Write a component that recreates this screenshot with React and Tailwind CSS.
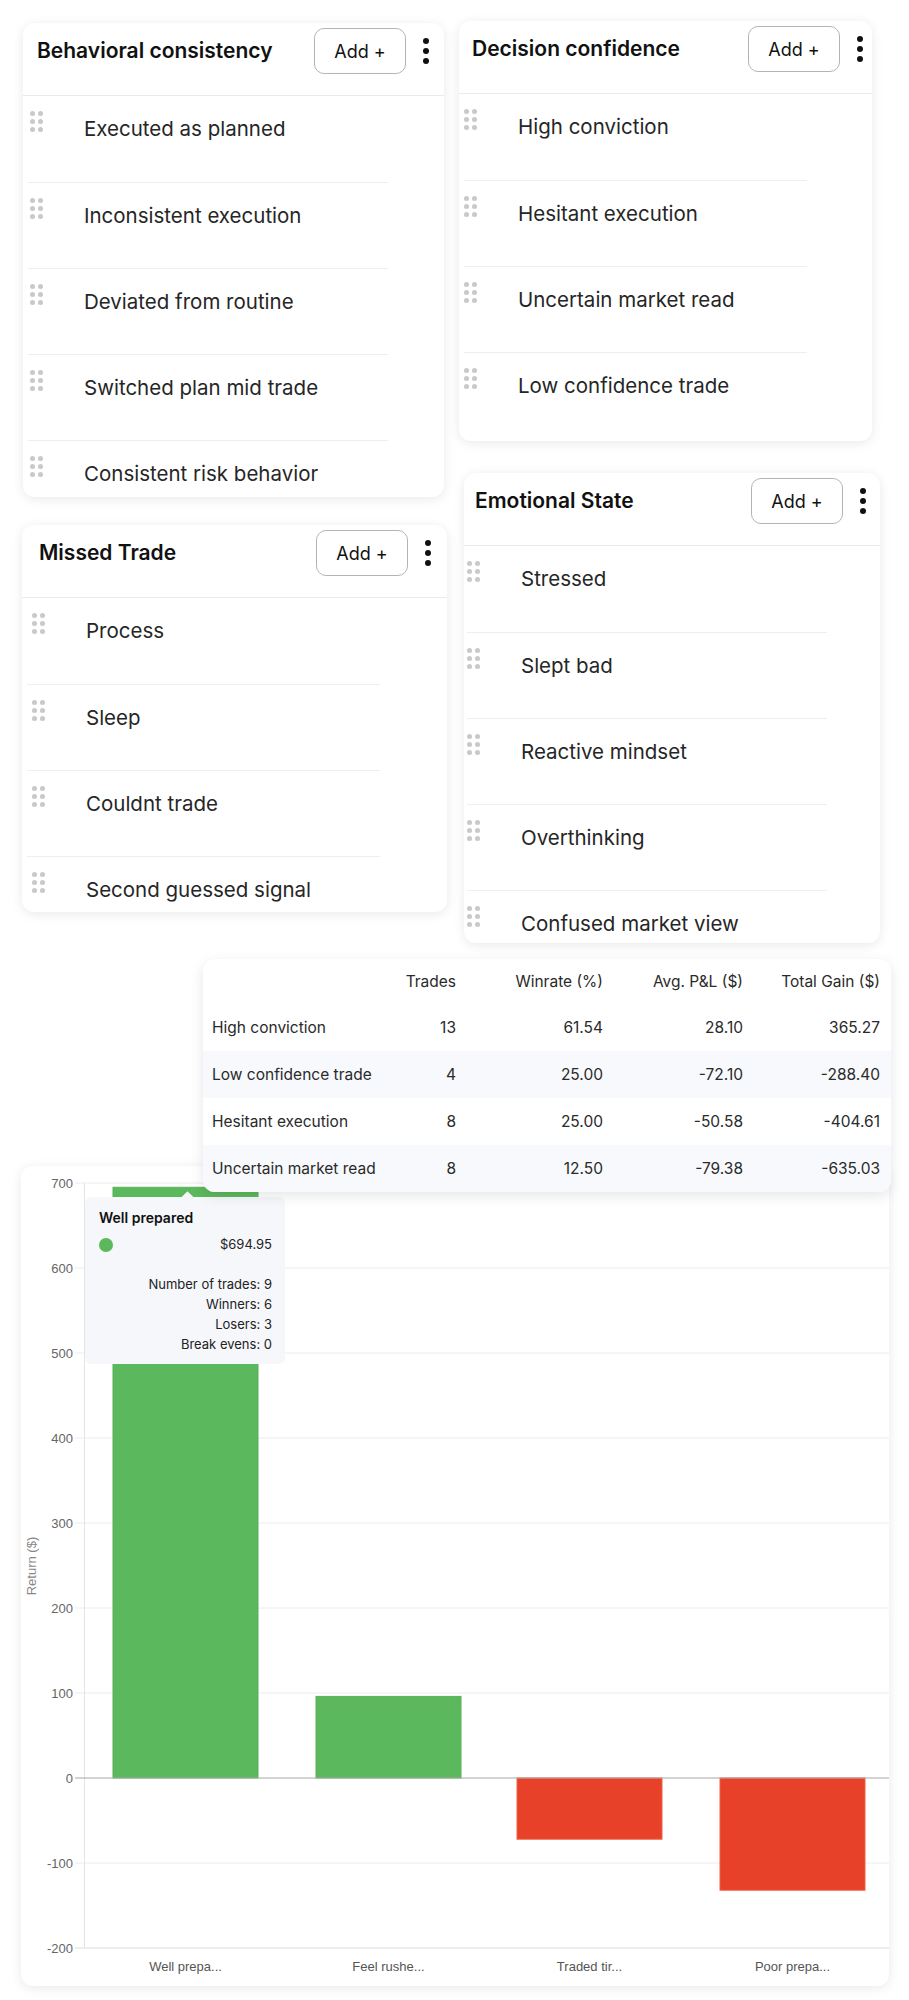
import React from "react";

const cards = {
  behavioral: {
    title: "Behavioral consistency",
    items: [
      "Executed as planned",
      "Inconsistent execution",
      "Deviated from routine",
      "Switched plan mid trade",
      "Consistent risk behavior",
    ],
  },
  decision: {
    title: "Decision confidence",
    items: [
      "High conviction",
      "Hesitant execution",
      "Uncertain market read",
      "Low confidence trade",
    ],
  },
  missed: {
    title: "Missed Trade",
    items: ["Process", "Sleep", "Couldnt trade", "Second guessed signal"],
  },
  emotional: {
    title: "Emotional State",
    items: [
      "Stressed",
      "Slept bad",
      "Reactive mindset",
      "Overthinking",
      "Confused market view",
    ],
  },
};

const tableRows = [
  ["High conviction", "13", "61.54", "28.10", "365.27"],
  ["Low confidence trade", "4", "25.00", "-72.10", "-288.40"],
  ["Hesitant execution", "8", "25.00", "-50.58", "-404.61"],
  ["Uncertain market read", "8", "12.50", "-79.38", "-635.03"],
];

const bars = [
  { label: "Well prepa...", value: 694.95, x: 92 },
  { label: "Feel rushe...", value: 96, x: 295 },
  { label: "Traded tir...", value: -72, x: 496 },
  { label: "Poor prepa...", value: -132, x: 699 },
];

const DragHandle = () => (
  <div className="grid grid-cols-2 gap-[3px] w-[13px] shrink-0">
    {[0, 1, 2, 3, 4, 5].map((i) => (
      <span key={i} className="block w-[5px] h-[5px] rounded-full bg-[#c9c9c9]" />
    ))}
  </div>
);

const Kebab = () => (
  <div className="flex flex-col gap-[4px] items-center w-[6px]">
    <span className="block w-[6px] h-[6px] rounded-full bg-[#111]" />
    <span className="block w-[6px] h-[6px] rounded-full bg-[#111]" />
    <span className="block w-[6px] h-[6px] rounded-full bg-[#111]" />
  </div>
);

const TagCard = ({ data, className, headCls, rowCls }) => (
  <div
    className={`bg-white rounded-[12px] overflow-hidden shadow-[0_2px_12px_rgba(0,0,0,0.09)] ${className}`}
  >
    <div className="h-[73px] pt-[5px] border-b border-[#ebebeb]">
      <div className={`h-[46px] flex items-center ${headCls}`}>
        <h3 className="text-[21px] font-semibold text-[#111]">{data.title}</h3>
        <button className="ml-auto h-[46px] w-[92px] rounded-[10px] border border-[#b4b4b4] text-[18px] text-[#111]">
          Add +
        </button>
        <div className="ml-[17px]">
          <Kebab />
        </div>
      </div>
    </div>
    {data.items.map((item, i) => (
      <div
        key={item}
        className={`h-[86px] pt-[15px] flex items-start ${rowCls} ${
          i > 0 ? "border-t border-[#eeeeee]" : ""
        }`}
      >
        <DragHandle />
        <span className="ml-[41px] mt-[3px] text-[20.5px] leading-[30px] text-[#262626]">
          {item}
        </span>
      </div>
    ))}
  </div>
);

const cols = "grid grid-cols-[180px_64px_147px_140px_137px] pl-[9px] pr-[11px] items-center";

const StatsTable = () => (
  <div className="relative z-10 ml-[203px] w-[688px] bg-white rounded-[12px] overflow-hidden shadow-[0_4px_14px_rgba(0,0,0,0.1)] text-[15.5px] text-[#2a2a2a]">
    <div className={`${cols} h-[45px]`}>
      <span />
      <span className="text-right">Trades</span>
      <span className="text-right">Winrate (%)</span>
      <span className="text-right">Avg. P&amp;L ($)</span>
      <span className="text-right">Total Gain ($)</span>
    </div>
    {tableRows.map((row, i) => (
      <div
        key={row[0]}
        className={`${cols} h-[47px] ${i % 2 === 1 ? "bg-[#f7f9fc]" : "bg-white"}`}
      >
        <span className="whitespace-nowrap">{row[0]}</span>
        <span className="text-right">{row[1]}</span>
        <span className="text-right">{row[2]}</span>
        <span className="text-right">{row[3]}</span>
        <span className="text-right">{row[4]}</span>
      </div>
    ))}
  </div>
);

const yFor = (v) => 612 - 0.85 * v;

const ReturnChart = () => {
  const ticks = [700, 600, 500, 400, 300, 200, 100, 0, -100, -200];
  return (
    <div className="relative mt-[-26px] ml-[21px] w-[868px] h-[820px] bg-white rounded-[12px] overflow-hidden shadow-[0_2px_12px_rgba(0,0,0,0.09)]">
      <svg width="868" height="820" className="block font-['Liberation_Sans',Arial,sans-serif]">
        {ticks.map((t) => (
          <g key={t}>
            {t !== 0 && (
              <line
                x1="54"
                x2="868"
                y1={yFor(t)}
                y2={yFor(t)}
                stroke={t === -200 ? "#dcdcdc" : "#ececec"}
                strokeWidth="1"
              />
            )}
            <text x="52" y={yFor(t) + 4.5} textAnchor="end" fontSize="13" fill="#666">
              {t}
            </text>
          </g>
        ))}
        <line x1="63.5" x2="63.5" y1={yFor(700)} y2={yFor(-200)} stroke="#e4e4e4" />
        {bars.map((b) => {
          const y0 = yFor(0);
          const y1 = yFor(b.value);
          const pos = b.value >= 0;
          return (
            <g key={b.label}>
              <rect
                x={b.x}
                y={pos ? y1 : y0}
                width="145"
                height={Math.abs(y1 - y0)}
                fill={pos ? "#5cb85c" : "#e8412a"}
                stroke={pos ? "#57b257" : "#f0603e"}
                strokeWidth="1"
              />
              <text x={b.x + 72.5} y="805" textAnchor="middle" fontSize="13" fill="#555">
                {b.label}
              </text>
            </g>
          );
        })}
        <line x1="54" x2="868" y1={yFor(0)} y2={yFor(0)} stroke="#a8a8a8" strokeWidth="1.2" />
        <text
          x="15"
          y="400"
          transform="rotate(-90 15 400)"
          textAnchor="middle"
          fontSize="13"
          fill="#888"
        >
          Return ($)
        </text>
      </svg>

      {/* tooltip for the hovered bar */}
      <div className="absolute left-[64px] top-[31px] w-[200px] h-[167px] rounded-[6px] bg-[#f6f7fa] pl-[14px] pr-[13px] pt-[11px] font-[Inter,sans-serif]">
        <span className="absolute left-[98px] top-[-4px] w-[9px] h-[9px] rotate-45 bg-[#f6f7fa]" />
        <div className="text-[14px] leading-[20px] font-semibold text-[#111]">Well prepared</div>
        <div className="flex items-center justify-between mt-[7px]">
          <span className="block w-[14px] h-[14px] rounded-full bg-[#5cb85c]" />
          <span className="text-[13px] text-[#222]">$694.95</span>
        </div>
        <div className="mt-[19px] text-right text-[13px] leading-[20px] text-[#222]">
          <div>Number of trades: 9</div>
          <div>Winners: 6</div>
          <div>Losers: 3</div>
          <div>Break evens: 0</div>
        </div>
      </div>
    </div>
  );
};

export default function App() {
  return (
    <div className="w-[909px] min-h-[2000px] bg-white pt-[21px] font-[Inter,'Noto_Sans',sans-serif]">
      <div className="flex items-start">
        <div className="ml-[22px] w-[425px] flex flex-col">
          <TagCard
            data={cards.behavioral}
            className="mt-[2px] ml-[1px] w-[421px] h-[474px]"
            headCls="pl-[14px] pr-[15px]"
            rowCls="ml-[5px] pl-[2px] mr-[56px]"
          />
          <TagCard
            data={cards.missed}
            className="mt-[28px] w-[425px] h-[387px]"
            headCls="pl-[17px] pr-[16px]"
            rowCls="ml-[5px] pl-[5px] mr-[67px]"
          />
        </div>
        <div className="ml-[12px] w-[421px] flex flex-col">
          <TagCard
            data={cards.decision}
            className="w-[413px] h-[420px]"
            headCls="pl-[13px] pr-[9px]"
            rowCls="ml-[5px] pl-0 mr-[65px]"
          />
          <TagCard
            data={cards.emotional}
            className="mt-[32px] ml-[5px] w-[416px] h-[470px]"
            headCls="pl-[11px] pr-[14px]"
            rowCls="ml-[3px] pl-0 mr-[53px]"
          />
        </div>
      </div>
      <div className="mt-[16px]">
        <StatsTable />
        <ReturnChart />
      </div>
    </div>
  );
}
